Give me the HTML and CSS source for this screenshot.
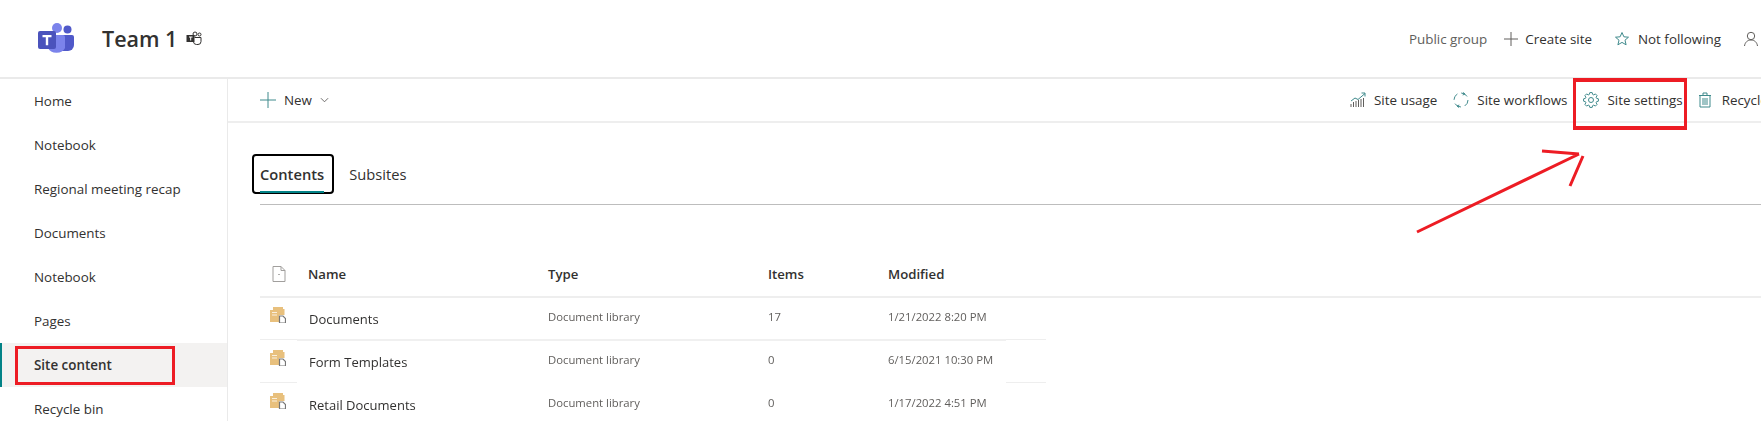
FILE: index.html
```html
<!DOCTYPE html>
<html lang="en">
<head>
<meta charset="utf-8">
<title>Team 1 - Site contents</title>
<link rel="stylesheet" href="styles.css">
</head>
<body>
<div class="page">
  <header class="site-head">
    <svg class="logo" viewBox="0 0 36 32" aria-hidden="true">
      <circle cx="29.5" cy="6.5" r="4" fill="#5059c9"/>
      <path d="M24 12h10a2 2 0 0 1 2 2v8a6 6 0 0 1-6 6h-6z" fill="#5059c9"/>
      <circle cx="19" cy="5" r="5" fill="#7b83eb"/>
      <path d="M10 12h15a2 2 0 0 1 2 2v11a9 7 0 0 1-17 0z" fill="#7b83eb"/>
      <rect x="0" y="8" width="18" height="18" rx="2" fill="#4b53bc"/>
      <path d="M4.5 12h9v2.2h-3.300v8h-2.400v-8h-3.300z" fill="#fff"/>
    </svg>
    <h1 class="site-title">Team 1</h1>
    <svg class="teams-mini" viewBox="0 0 16 16" aria-hidden="true">
      <rect x="0.500" y="4" width="8" height="7" fill="#323130"/>
      <path d="M3 6h3.500M4.700 6v3.500" stroke="#fff" fill="none"/>
      <circle cx="9" cy="3" r="2" fill="none" stroke="#323130"/>
      <circle cx="13.500" cy="3.500" r="1.500" fill="none" stroke="#323130"/>
      <path d="M8.500 6.500h6.500v4a3 3 0 0 1-3 3h-1.500a3 3 0 0 1-3-2.500" fill="none" stroke="#323130"/>
    </svg>
    <div class="head-actions">
      <span class="head-label">Public group</span>
      <span class="head-action head-create">
        <svg class="ico" viewBox="0 0 16 16" aria-hidden="true"><path d="M8 1v14M1 8h14" class="line-grey"/></svg>
        Create site
      </span>
      <span class="head-action head-follow">
        <svg class="ico" viewBox="0 0 16 16" aria-hidden="true"><path d="M8 1.500l1.900 4.300 4.600.4-3.500 3 1.100 4.600L8 11.400l-4.100 2.400 1.100-4.600-3.500-3 4.600-.4z" class="line-teal"/></svg>
        Not following
      </span>
      <svg class="ico head-person" viewBox="0 0 16 16" aria-hidden="true"><circle cx="8" cy="5" r="3.700" class="line-grey"/><path d="M1.500 15c.5-3.700 3-6 6.500-6s6 2.300 6.500 6" class="line-grey"/></svg>
    </div>
  </header>

  <div class="layout">
    <nav class="side-nav">
      <a class="nav-item">Home</a>
      <a class="nav-item">Notebook</a>
      <a class="nav-item">Regional meeting recap</a>
      <a class="nav-item">Documents</a>
      <a class="nav-item">Notebook</a>
      <a class="nav-item">Pages</a>
      <a class="nav-item nav-current">Site content</a>
      <a class="nav-item">Recycle bin</a>
    </nav>

    <main class="content">
      <div class="command-bar">
        <span class="cmd cmd-new">
          <svg class="ico" viewBox="0 0 16 16" aria-hidden="true"><path d="M8 0v16M0 8h16" class="line-teal"/></svg>
          New
          <svg class="chev" viewBox="0 0 10 6" aria-hidden="true"><path d="M1 1l4 4 4-4" class="line-grey"/></svg>
        </span>
        <div class="cmd-right">
          <span class="cmd">
            <svg class="ico" viewBox="0 0 16 16" aria-hidden="true">
              <path d="M1 15v-3M3.500 15V10M6 15V9M8.500 15V8M11 15V7M13.500 15V6" class="line-grey"/>
              <path d="M1 9l4-3 3 1.500L15 1.500M11.500 1H15v3.500" class="line-teal"/>
            </svg>
            Site usage
          </span>
          <span class="cmd">
            <svg class="ico" viewBox="0 0 16 16" aria-hidden="true">
              <circle cx="8" cy="8" r="7" class="line-teal dashed"/>
              <path d="M10 .5l2 1.500-2.300 1M6 15.500L4 14l2.300-1" class="line-teal"/>
            </svg>
            Site workflows
          </span>
          <span class="cmd">
            <svg class="ico" viewBox="0 0 16 16" aria-hidden="true">
              <polygon class="line-teal" points="15.41,9.170 13.550,9.700 13.120,10.720 14.070,12.410 12.410,14.070 10.720,13.120 9.700,13.550 9.170,15.410 6.830,15.410 6.300,13.550 5.280,13.120 3.590,14.070 1.930,12.410 2.880,10.720 2.450,9.700 .59,9.170 .59,6.830 2.450,6.300 2.880,5.280 1.930,3.590 3.590,1.930 5.280,2.880 6.300,2.450 6.830,.59 9.170,.59 9.700,2.450 10.720,2.880 12.410,1.930 14.070,3.590 13.120,5.280 13.550,6.300 15.410,6.830"/>
              <circle cx="8" cy="8" r="2.500" class="line-teal"/>
            </svg>
            Site settings
          </span>
          <span class="cmd cmd-recycle">
            <svg class="ico ico-trash" viewBox="2 0 12 16" aria-hidden="true">
              <path d="M3 3.500h10V15H3zM2 3.500h12M6 3.500V1h4v2.500M6 6v7M8 6v7M10 6v7" class="line-teal"/>
            </svg>
            Recycle bin
          </span>
        </div>
      </div>

      <div class="tabs">
        <span class="tab tab-active">Contents</span>
        <span class="tab">Subsites</span>
      </div>
      <div class="tab-rule"></div>

      <section class="list">
        <div class="list-head">
          <svg class="doc-head" viewBox="0 0 14 16" aria-hidden="true">
            <path d="M1 .5h8l4 4v11H1zM9 .5v4h4" class="line-soft"/>
            <path d="M7 8v1" stroke="#605e5c" fill="none"/>
          </svg>
          <span>Name</span><span>Type</span><span>Items</span><span>Modified</span>
        </div>
        <div class="sep-head"></div>

        <div class="row">
          <svg class="lib" viewBox="0 0 16 16" aria-hidden="true"><use href="#lib-icon"/></svg>
          <span class="cell-name fuzzy">Documents</span>
          <span class="cell fuzzy">Document library</span>
          <span class="cell fuzzy">17</span>
          <span class="cell fuzzy">1/21/2022 8:20 PM</span>
        </div>
        <div class="sep"><i class="thin"></i><i class="thick"></i><i class="thin"></i></div>

        <div class="row">
          <svg class="lib" viewBox="0 0 16 16" aria-hidden="true"><use href="#lib-icon"/></svg>
          <span class="cell-name fuzzy">Form Templates</span>
          <span class="cell fuzzy">Document library</span>
          <span class="cell fuzzy">0</span>
          <span class="cell fuzzy">6/15/2021 10:30 PM</span>
        </div>
        <div class="sep"><i class="thin"></i><i class="none"></i><i class="thin"></i></div>

        <div class="row">
          <svg class="lib" viewBox="0 0 16 16" aria-hidden="true"><use href="#lib-icon"/></svg>
          <span class="cell-name fuzzy">Retail Documents</span>
          <span class="cell fuzzy">Document library</span>
          <span class="cell fuzzy">0</span>
          <span class="cell fuzzy">1/17/2022 4:51 PM</span>
        </div>
      </section>
    </main>
  </div>

  <svg class="defs" aria-hidden="true">
    <symbol id="lib-icon" viewBox="0 0 16 16">
      <path d="M3 0h10v2h1.500v6H9v7H0V3h3z" fill="#e8c07d"/>
      <path d="M2 5h5v1H2zM2 7.500h5v1H2z" fill="#fff" opacity=".75"/>
      <path d="M9.500 9h3.500l2.500 2.500V16h-6z" fill="#fff" stroke="#767676" stroke-width="1.200"/>
    </symbol>
  </svg>

  <div class="mark mark-nav"></div>
  <div class="mark mark-settings"></div>
  <svg class="arrow" viewBox="0 0 1761 421" aria-hidden="true">
    <path d="M1417 232L1579 154M1542 151l37 3M1583 156l-13 30"/>
  </svg>
</div>
</body>
</html>
```

FILE: styles.css
```css
* { box-sizing: border-box; }

html, body {
  margin: 0;
  padding: 0;
  background: #fff;
}

body {
  font-family: "Open Sans", "Noto Sans", "Liberation Sans", sans-serif;
  font-size: 13.400px;
  color: #323130;
}

.page {
  position: relative;
  width: 1761px;
  height: 421px;
  overflow: hidden;
}

/* icons */
.ico { width: 16px; height: 16px; flex: none; }
.ico-trash { width: 12px; }
.line-grey, .line-teal, .line-soft { fill: none; stroke-width: 1; }
.line-grey { stroke: #605e5c; }
.line-teal { stroke: #3f8a8c; stroke-linejoin: round; }
.line-soft { stroke: #a19f9d; }
.dashed { stroke-dasharray: 7 4; }

/* site header */
.site-head {
  display: flex;
  align-items: center;
  height: 79px;
  padding-left: 38px;
  border-bottom: 2px solid #eaeaea;
}

.logo { width: 36px; height: 32px; flex: none; }

.site-title {
  margin: 0 0 0 28px;
  font-size: 21.500px;
  font-weight: 600;
  color: #323130;
}

.teams-mini { width: 16px; height: 16px; margin-left: 9px; }

.head-actions {
  display: flex;
  align-items: center;
  margin-left: auto;
  color: #323130;
}

.head-label { color: #605e5c; margin-right: 16px; }
.head-action { display: inline-flex; align-items: center; gap: 8px; }
.head-create { gap: 6px; }
.head-follow { margin-left: 22px; }
.head-person { margin-left: 22px; margin-right: 2px; }

/* page columns */
.layout { display: flex; height: 342px; }

.side-nav {
  width: 228px;
  flex: none;
  display: flex;
  flex-direction: column;
  border-right: 1px solid #eaeaea;
}

.nav-item {
  display: flex;
  align-items: center;
  flex: none;
  height: 44px;
  padding-left: 34px;
  color: #323130;
}

.nav-current {
  background: #f3f2f1;
  border-left: 2px solid #038387;
  padding-left: 32px;
  font-weight: 600;
}

.content { flex: 1; min-width: 0; }

/* command bar */
.command-bar {
  display: flex;
  align-items: center;
  height: 44px;
  padding-left: 32px;
  border-bottom: 2px solid #eeeeee;
}

.cmd {
  display: inline-flex;
  align-items: center;
  gap: 8px;
  white-space: nowrap;
}

.cmd-recycle { gap: 11px; }

.cmd-new .chev { width: 9px; height: 6px; }

.cmd-right {
  display: flex;
  gap: 16px;
  margin-left: auto;
  width: 411px;
  flex: none;
  overflow: hidden;
}

/* tabs */
.tabs {
  display: flex;
  align-items: stretch;
  margin: 31px 0 0 24px;
  height: 40px;
  font-size: 14.700px;
}

.tab {
  display: flex;
  align-items: center;
  padding: 0 8px;
  color: #323130;
}

.tab + .tab { margin-left: 7px; }

.tab-active {
  position: relative;
  font-weight: 600;
  border: 2px solid #000;
  border-radius: 4px;
  padding: 0 8px 0 6px;
}

.tab-active::after {
  content: "";
  position: absolute;
  left: 6px;
  right: 8px;
  bottom: -1px;
  height: 2px;
  background: #038387;
}

.tab-rule {
  height: 1px;
  margin: 10px 0 0 32px;
  background: #bdbdbd;
}

/* list */
.list { margin: 47px 0 0 32px; }

.list-head, .row {
  display: grid;
  grid-template-columns: 48px 240px 220px 120px 158px;
  width: 786px;
  align-items: center;
}

.list-head {
  height: 44px;
  font-weight: 600;
  font-size: 13.200px;
}

.doc-head { width: 14px; height: 16px; margin-left: 12px; }

.sep { display: flex; width: 786px; height: 2px; align-items: flex-start; }
.sep-head { height: 2px; background: #eeeeee; }
.thin { display: block; width: 37px; height: 1px; background: #eeeeee; }
.thick { display: block; width: 709px; height: 2px; background: #f0f0f0; }
.none { display: block; width: 709px; }
.sep .thin:last-child { width: 40px; }

.row { height: 41px; }

.lib { width: 16px; height: 16px; margin: -8px 0 0 10px; }

.cell-name { font-size: 13px; margin: 1px 0 0 1px; }
.cell { font-size: 11.300px; color: #605e5c; margin-top: -5px; }
.fuzzy { filter: blur(.45px); }

/* hand-drawn annotations */
.defs { position: absolute; width: 0; height: 0; }

.mark {
  position: absolute;
  border: 3px solid #ed1c24;
  pointer-events: none;
}

.mark-nav { left: 15px; top: 346px; width: 160px; height: 39px; }
.mark-settings { left: 1573px; top: 78px; width: 114px; height: 52px; border-width: 4px 3px; }

.arrow {
  position: absolute;
  left: 0;
  top: 0;
  width: 1761px;
  height: 421px;
  pointer-events: none;
}

.arrow path {
  fill: none;
  stroke: #ed1c24;
  stroke-width: 3;
}
```
